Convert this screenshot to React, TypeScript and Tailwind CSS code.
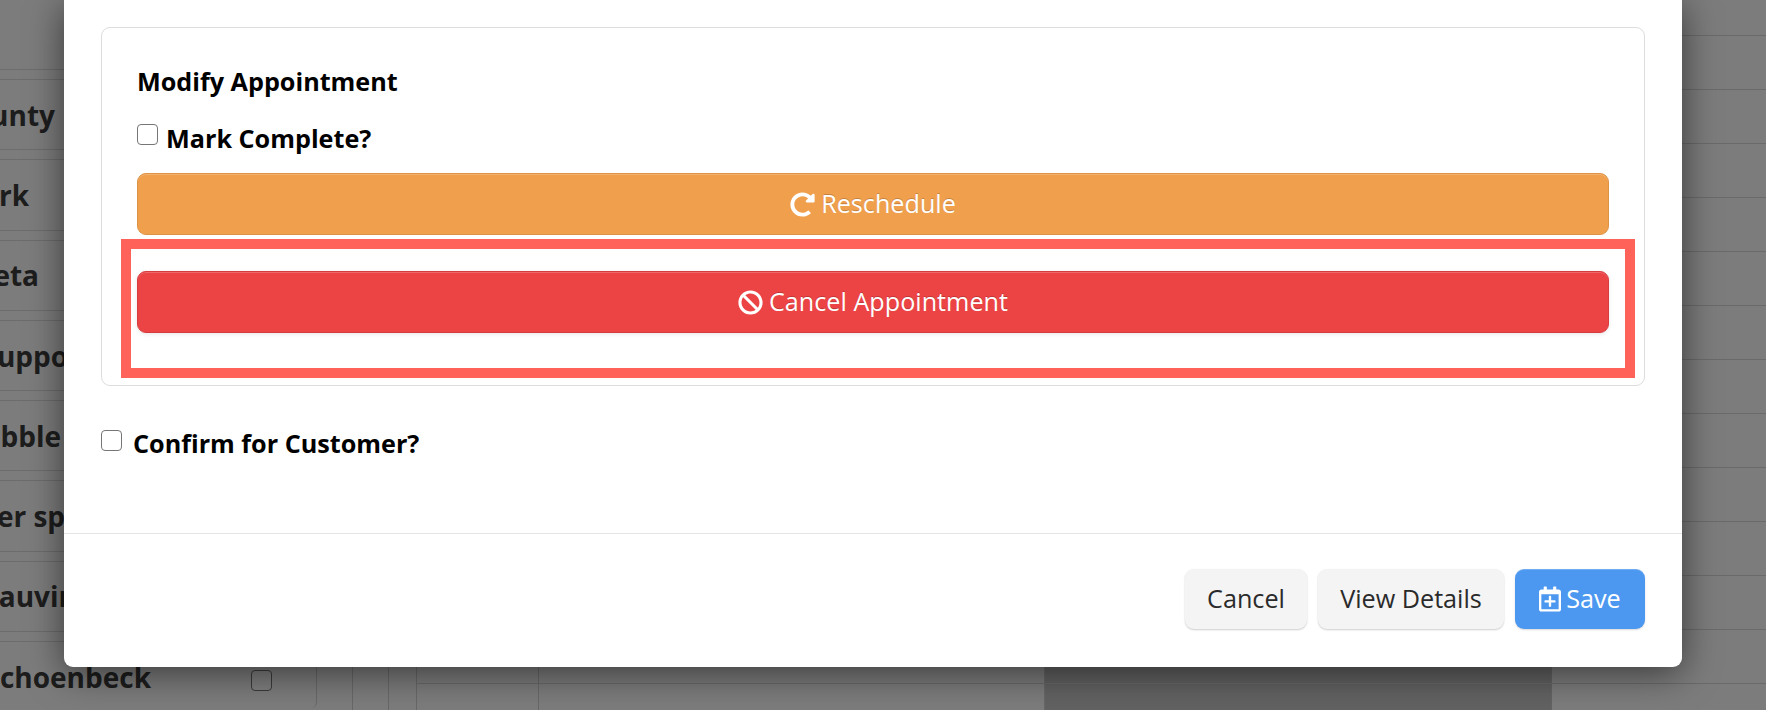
import { FaBan, FaRedoAlt, FaRegCalendarPlus } from 'react-icons/fa';

const rows = [
  { label: 'unty', width: 'w-[55px]' },
  { label: 'rk', width: 'w-[29px]' },
  { label: 'eta', width: 'w-[39px]' },
  { label: 'upport', width: 'w-[93px]' },
  { label: 'bble', width: 'w-[61px]' },
  { label: 'er spec', width: 'w-[96px]' },
  { label: 'auvin', width: 'w-[77px]' },
  { label: 'choenbeck', width: 'w-[151px]' },
];

const gridRows = Array.from({ length: 13 }, (_, i) => i);

function LeftTable() {
  return (
    <div className="w-[317px] h-[708px] shrink-0 border-r border-[#d0d0d0] rounded-br-[6px] flex flex-col gap-[9px]">
      <div className="h-[70px] shrink-0 border-b border-[#d8d8d8]" />
      {rows.map((row) => (
        <div
          key={row.label}
          className="relative h-[71.3px] shrink-0 border-y border-[#d8d8d8] flex items-center"
        >
          <div className={`${row.width} flex justify-end whitespace-nowrap text-[28px] font-bold text-[#3a3a3a]`}>
            {row.label}
          </div>
          <input
            type="checkbox"
            className="absolute left-[251px] top-[28px] w-[21px] h-[21px] appearance-none bg-white border-[1.5px] border-[#767676] rounded-[4px]"
          />
        </div>
      ))}
    </div>
  );
}

function Calendar() {
  return (
    <div className="flex-1 flex min-w-0">
      <div className="w-[36px] border-r border-[#d0d0d0]" />
      <div className="w-[36px] border-r border-[#d0d0d0]" />
      <div className="w-[28px] border-r border-[#d0d0d0]" />
      <div className="flex-1 flex flex-col">
        <div className="h-[36px] shrink-0 border-b border-[#d4d4d4]" />
        {gridRows.map((i) => (
          <div key={i} className="h-[54px] shrink-0 border-b border-[#d4d4d4] flex">
            <div className="w-[122px] border-r border-[#d0d0d0]" />
            <div className="w-[506px] border-r border-[#d0d0d0]" />
            <div className="w-[507px] border-r border-[#c8c8c8] bg-[#c4c4c4]" />
            <div className="flex-1" />
          </div>
        ))}
      </div>
    </div>
  );
}

function Modal() {
  return (
    <div className="absolute left-[64px] top-0 w-[1618px] h-[667px] bg-white rounded-b-[9px] shadow-[0_6px_36px_rgba(0,0,0,0.55)] flex flex-col">
      <div className="px-[37px] pt-[27px] flex-1">
        <div className="relative h-[359px] border border-[#dddddd] rounded-[9px] px-[35px] pt-[30px]">
          <h3 className="text-[25.2px] leading-[46px] font-bold text-black">Modify Appointment</h3>
          <label className="mt-[8px] h-[40px] flex items-start gap-[8px] text-[25.2px] font-bold text-black">
            <input
              type="checkbox"
              className="mt-[12px] w-[21px] h-[21px] appearance-none bg-white border-[1.5px] border-[#767676] rounded-[4px]"
            />
            <span className="leading-[40px] mt-[6px]">Mark Complete?</span>
          </label>
          <button className="mt-[21px] w-full h-[62px] flex items-center justify-center gap-[6px] rounded-[9px] border border-[#dd9346] bg-[#f09f4d] shadow-[inset_0_1px_0_rgba(255,255,255,0.2)] text-[25.2px] text-white [text-shadow:0_-1px_0_rgba(0,0,0,0.2)]">
            <FaRedoAlt className="w-[25px] h-[25px]" />
            Reschedule
          </button>
          <button className="mt-[36px] w-full h-[62px] flex items-center justify-center gap-[6px] rounded-[9px] border border-[#d93c3f] bg-[#ec4345] shadow-[inset_0_1px_0_rgba(255,255,255,0.2),0_1px_4px_rgba(0,0,0,0.1)] text-[25.2px] text-white [text-shadow:0_-1px_0_rgba(0,0,0,0.2)]">
            <FaBan className="w-[25px] h-[25px]" />
            Cancel Appointment
          </button>
          <div className="absolute left-[19px] top-[211px] w-[1514px] h-[139px] border-[10px] border-[#ff6258]" />
        </div>
        <label className="mt-[43px] flex items-start gap-[11px] text-[25.2px] font-bold text-black">
          <input
            type="checkbox"
            className="mt-[1px] w-[21px] h-[21px] appearance-none bg-white border-[1.5px] border-[#767676] rounded-[4px]"
          />
          <span className="leading-[28px]">Confirm for Customer?</span>
        </label>
      </div>
      <div className="h-[134px] shrink-0 border-t border-[#e5e5e5] px-[37px] pt-[35px] flex justify-end gap-[11px]">
        <button className="w-[122px] h-[60px] rounded-[9px] bg-[#f4f4f4] shadow-[0_1px_2px_rgba(0,0,0,0.2)] text-[25.2px] text-[#2a2a2a]">
          Cancel
        </button>
        <button className="w-[186px] h-[60px] rounded-[9px] bg-[#f4f4f4] shadow-[0_1px_2px_rgba(0,0,0,0.2)] text-[25.2px] text-[#2a2a2a]">
          View Details
        </button>
        <button className="w-[130px] h-[60px] flex items-center justify-center gap-[5px] rounded-[9px] bg-[#4c98f0] shadow-[inset_0_1px_0_rgba(255,255,255,0.2),0_1px_2px_rgba(0,0,0,0.15)] text-[25.2px] text-white">
          <FaRegCalendarPlus className="w-[22px] h-[26px]" />
          Save
        </button>
      </div>
    </div>
  );
}

export default function App() {
  return (
    <div className="relative w-[1766px] h-[710px] overflow-hidden bg-[#f8f8f8] flex font-['Open_Sans',sans-serif]">
      <LeftTable />
      <Calendar />
      <div className="absolute inset-0 bg-black/50" />
      <Modal />
    </div>
  );
}
